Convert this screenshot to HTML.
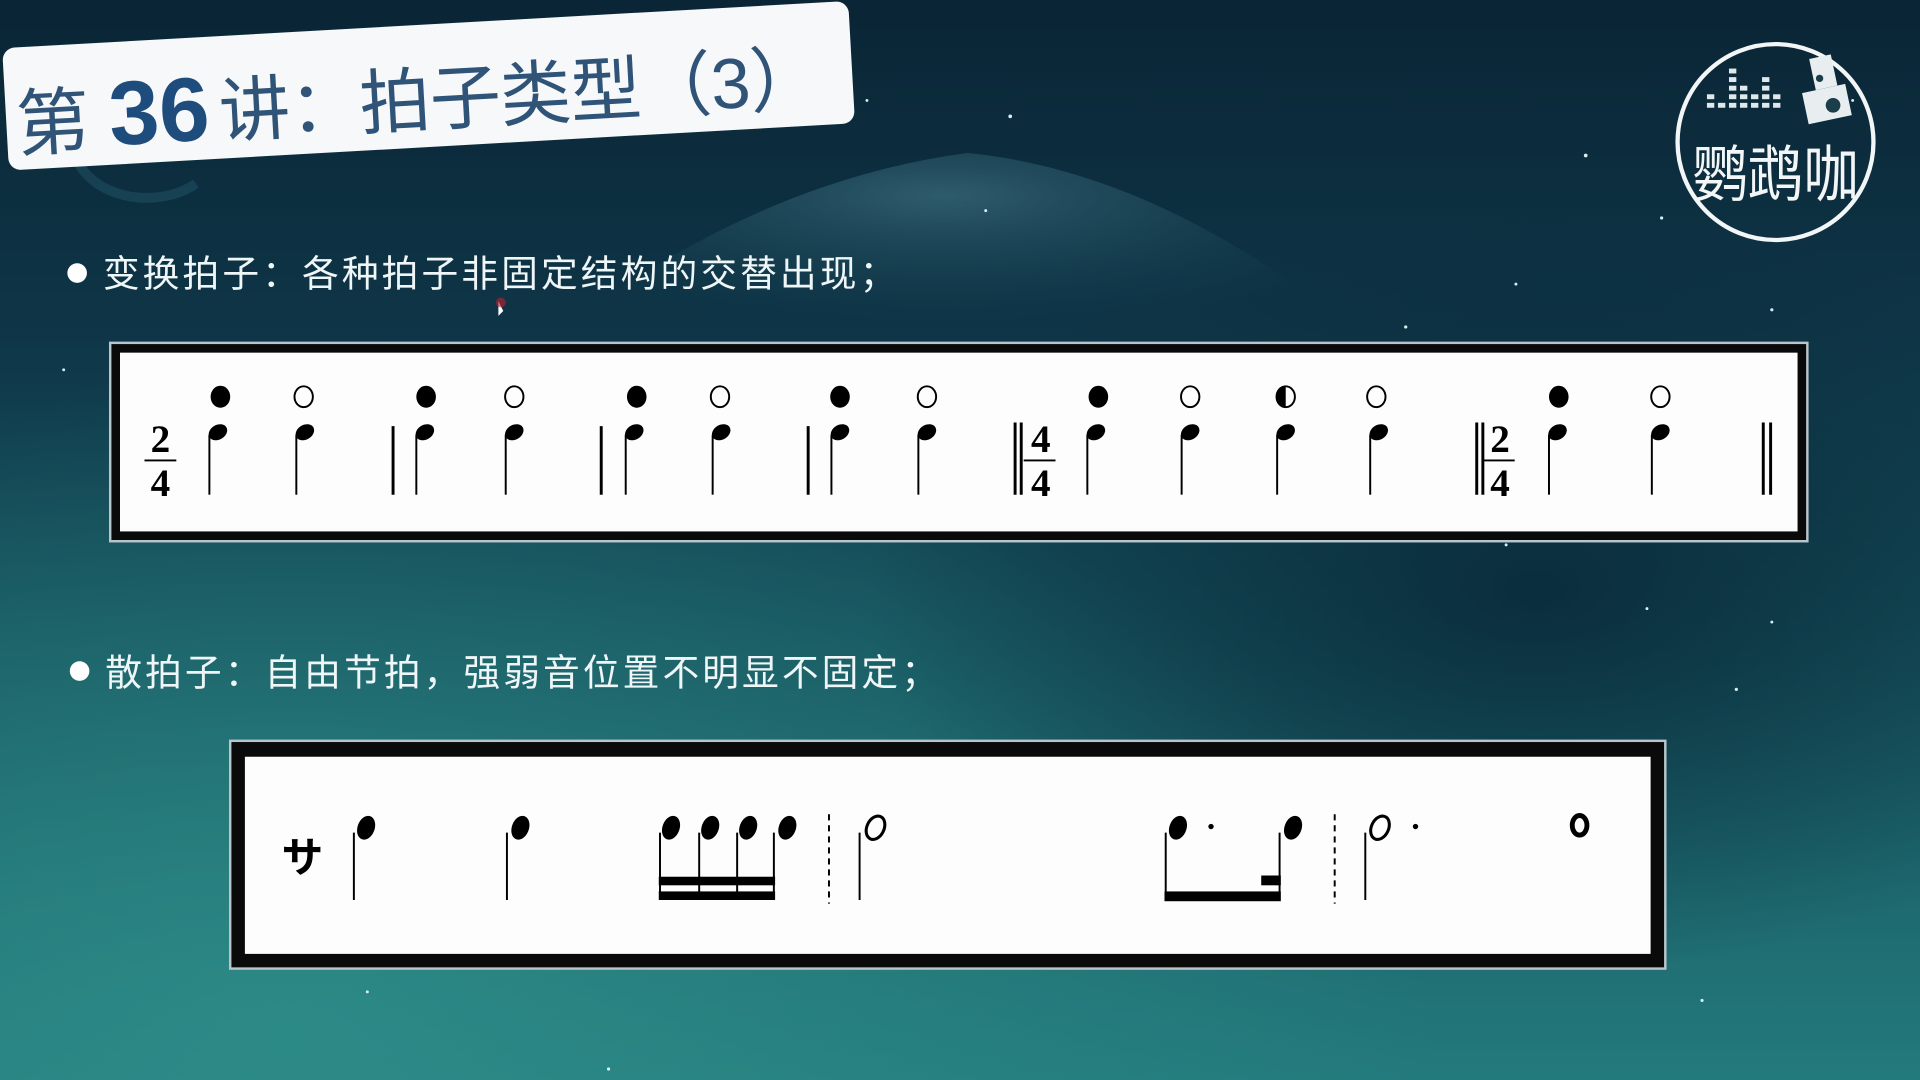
<!DOCTYPE html>
<html><head><meta charset="utf-8"><style>
html,body{margin:0;padding:0;width:1920px;height:1080px;overflow:hidden;background:#0d3444}
svg{display:block}
</style></head><body>
<svg width="1920" height="1080" viewBox="0 0 1568 882" xmlns="http://www.w3.org/2000/svg">
<defs>
<linearGradient id="bg" x1="0" y1="0" x2="0" y2="1">
<stop offset="0" stop-color="#0a2535"/>
<stop offset="0.3" stop-color="#0e3547"/>
<stop offset="0.6" stop-color="#16535e"/>
<stop offset="1" stop-color="#237a7c"/>
</linearGradient>
<radialGradient id="glow1" cx="0.15" cy="0.95" r="0.6">
<stop offset="0" stop-color="#2f8f8a" stop-opacity="0.8"/>
<stop offset="1" stop-color="#2f8f8a" stop-opacity="0"/>
</radialGradient>
<radialGradient id="glow2" cx="0.8" cy="0.55" r="0.35">
<stop offset="0" stop-color="#082535" stop-opacity="0.8"/>
<stop offset="1" stop-color="#082535" stop-opacity="0"/>
</radialGradient>
<radialGradient id="mtn" cx="0.5" cy="0.2" r="0.6">
<stop offset="0" stop-color="#3d6f80" stop-opacity="0.7"/>
<stop offset="1" stop-color="#1a4a5a" stop-opacity="0"/>
</radialGradient>
</defs>
<rect width="1568" height="882" fill="url(#bg)"/>
<rect width="1568" height="882" fill="url(#glow1)"/>
<rect width="1568" height="882" fill="url(#glow2)"/>
<path d="M420 300 Q600 150 790 125 Q950 140 1120 280 Z" fill="url(#mtn)"/>
<path d="M60 120 A60 45 0 0 0 160 150" fill="none" stroke="#1c4a5c" stroke-width="8" opacity="0.7"/>
<g fill="#d8eef0">
<circle cx="825" cy="95" r="1.5"/><circle cx="1295" cy="127" r="1.5"/><circle cx="1357" cy="178" r="1.3"/>
<circle cx="1447" cy="253" r="1.3"/><circle cx="1148" cy="267" r="1.3"/><circle cx="1238" cy="232" r="1.2"/>
<circle cx="805" cy="172" r="1.2"/><circle cx="52" cy="302" r="1.2"/><circle cx="1418" cy="563" r="1.3"/>
<circle cx="1390" cy="817" r="1.3"/><circle cx="497" cy="873" r="1.3"/><circle cx="1447" cy="508" r="1.2"/>
<circle cx="1513" cy="82" r="1.2"/><circle cx="708" cy="82" r="1.2"/><circle cx="1345" cy="497" r="1.2"/>
<circle cx="425" cy="780" r="1.2"/><circle cx="300" cy="810" r="1.2"/><circle cx="1230" cy="445" r="1.2"/>
</g>

<!-- title -->
<g transform="rotate(-3.2 350 70)">
<rect x="4" y="20" width="692" height="100" rx="10" fill="#f6f8fa"/>
<text x="12" y="104" font-family="'Liberation Sans','Noto Sans CJK SC',sans-serif" font-size="60" fill="#2f5478">第</text>
<text x="88" y="104" font-family="'Liberation Sans',sans-serif" font-weight="bold" font-size="74" fill="#1e4d7d" textLength="82" lengthAdjust="spacingAndGlyphs">36</text>
<text x="178" y="102" font-family="'Liberation Sans','Noto Sans CJK SC',sans-serif" font-size="58" fill="#2f5478" textLength="492" lengthAdjust="spacing">讲：拍子类型（3）</text>
</g>

<!-- logo -->
<g>
<circle cx="1450" cy="116" r="80" fill="none" stroke="#f2f6f7" stroke-width="3.5"/>
<g fill="#dfe9ec">
<rect x="1394" y="84" width="6" height="4"/><rect x="1403" y="84" width="6" height="4"/><rect x="1412" y="84" width="6" height="4"/><rect x="1421" y="84" width="6" height="4"/><rect x="1430" y="84" width="6" height="4"/><rect x="1439" y="84" width="6" height="4"/><rect x="1448" y="84" width="6" height="4"/>
<rect x="1394" y="77" width="6" height="4"/><rect x="1412" y="77" width="6" height="4"/><rect x="1421" y="77" width="6" height="4"/><rect x="1430" y="77" width="6" height="4"/><rect x="1439" y="77" width="6" height="4"/><rect x="1448" y="77" width="6" height="4"/>
<rect x="1412" y="70" width="6" height="4"/><rect x="1421" y="70" width="6" height="4"/><rect x="1439" y="70" width="6" height="4"/>
<rect x="1412" y="63" width="6" height="4"/><rect x="1439" y="63" width="6" height="4"/>
<rect x="1412" y="56" width="6" height="4"/>
</g>
<rect x="1480" y="46" width="18" height="26" fill="#e8eef0" transform="rotate(-12 1489 59)"/>
<rect x="1474" y="72" width="36" height="26" fill="#e8eef0" transform="rotate(-12 1492 85)"/>
<circle cx="1497" cy="86" r="6" fill="#1a3e4a"/><circle cx="1486" cy="64" r="3" fill="#1a3e4a"/>
<text x="1450" y="160" text-anchor="middle" font-family="'Noto Sans CJK SC','WenQuanYi Zen Hei',sans-serif" font-size="50" fill="#f2f6f7" textLength="136" lengthAdjust="spacingAndGlyphs">鹦鹉咖</text>
</g>

<!-- bullets -->
<g font-family="'Liberation Sans','Noto Sans CJK SC',sans-serif" font-size="30" fill="#eef6f7">
<circle cx="63" cy="223" r="8" fill="#fff"/>
<text x="84" y="234" textLength="648" lengthAdjust="spacing">变换拍子：各种拍子非固定结构的交替出现；</text>
<circle cx="65" cy="548" r="8" fill="#fff"/>
<text x="86" y="560" textLength="680" lengthAdjust="spacing">散拍子：自由节拍，强弱音位置不明显不固定；</text>
</g>
<path d="M407 246 L407 258 L411 254 Z" fill="#fff"/><circle cx="409" cy="247" r="4" fill="#c02030" opacity="0.6"/>

<!-- box 1 -->
<rect x="89" y="279" width="1388" height="164" fill="#b8c6cc"/>
<rect x="91" y="281" width="1384" height="160" fill="#0a0a0a"/>
<rect x="98" y="288" width="1370" height="146" fill="#fcfdfc"/>
<g fill="#000">
<ellipse cx="180" cy="324" rx="8" ry="9"/>
<ellipse cx="348" cy="324" rx="8" ry="9"/>
<ellipse cx="520" cy="324" rx="8" ry="9"/>
<ellipse cx="686" cy="324" rx="8" ry="9"/>
<ellipse cx="897" cy="324" rx="8" ry="9"/>
<ellipse cx="1273" cy="324" rx="8" ry="9"/>
<path d="M1050 315 A8 9 0 0 0 1050 333 Z"/>
</g>
<g fill="none" stroke="#000" stroke-width="1.6">
<ellipse cx="248" cy="324" rx="7.5" ry="8.5"/>
<ellipse cx="420" cy="324" rx="7.5" ry="8.5"/>
<ellipse cx="588" cy="324" rx="7.5" ry="8.5"/>
<ellipse cx="757" cy="324" rx="7.5" ry="8.5"/>
<ellipse cx="972" cy="324" rx="7.5" ry="8.5"/>
<ellipse cx="1124" cy="324" rx="7.5" ry="8.5"/>
<ellipse cx="1050" cy="324" rx="7.5" ry="8.5"/>
<ellipse cx="1356" cy="324" rx="7.5" ry="8.5"/>
</g>
<g>
<g fill="#000">
<ellipse cx="178" cy="353" rx="8" ry="6" transform="rotate(-30 178 353)"/>
<ellipse cx="249" cy="353" rx="8" ry="6" transform="rotate(-30 249 353)"/>
<ellipse cx="347" cy="353" rx="8" ry="6" transform="rotate(-30 347 353)"/>
<ellipse cx="420" cy="353" rx="8" ry="6" transform="rotate(-30 420 353)"/>
<ellipse cx="518" cy="353" rx="8" ry="6" transform="rotate(-30 518 353)"/>
<ellipse cx="589" cy="353" rx="8" ry="6" transform="rotate(-30 589 353)"/>
<ellipse cx="686" cy="353" rx="8" ry="6" transform="rotate(-30 686 353)"/>
<ellipse cx="757" cy="353" rx="8" ry="6" transform="rotate(-30 757 353)"/>
<ellipse cx="895" cy="353" rx="8" ry="6" transform="rotate(-30 895 353)"/>
<ellipse cx="972" cy="353" rx="8" ry="6" transform="rotate(-30 972 353)"/>
<ellipse cx="1050" cy="353" rx="8" ry="6" transform="rotate(-30 1050 353)"/>
<ellipse cx="1126" cy="353" rx="8" ry="6" transform="rotate(-30 1126 353)"/>
<ellipse cx="1272" cy="353" rx="8" ry="6" transform="rotate(-30 1272 353)"/>
<ellipse cx="1356" cy="353" rx="8" ry="6" transform="rotate(-30 1356 353)"/>
</g>
<g stroke="#000" stroke-width="1.6">
<line x1="171" y1="355" x2="171" y2="404"/><line x1="242" y1="355" x2="242" y2="404"/>
<line x1="340" y1="355" x2="340" y2="404"/><line x1="413" y1="355" x2="413" y2="404"/>
<line x1="511" y1="355" x2="511" y2="404"/><line x1="582" y1="355" x2="582" y2="404"/>
<line x1="679" y1="355" x2="679" y2="404"/><line x1="750" y1="355" x2="750" y2="404"/>
<line x1="888" y1="355" x2="888" y2="404"/><line x1="965" y1="355" x2="965" y2="404"/>
<line x1="1043" y1="355" x2="1043" y2="404"/><line x1="1119" y1="355" x2="1119" y2="404"/>
<line x1="1265" y1="355" x2="1265" y2="404"/><line x1="1349" y1="355" x2="1349" y2="404"/>
</g>
<g stroke="#000" stroke-width="2.4">
<line x1="321" y1="348" x2="321" y2="404"/><line x1="491" y1="348" x2="491" y2="404"/><line x1="660" y1="348" x2="660" y2="404"/>
<line x1="829" y1="345" x2="829" y2="404"/><line x1="834" y1="345" x2="834" y2="404"/>
<line x1="1206" y1="345" x2="1206" y2="404"/><line x1="1211" y1="345" x2="1211" y2="404"/>
<line x1="1440" y1="345" x2="1440" y2="404"/><line x1="1446" y1="345" x2="1446" y2="404"/>
</g>
<g font-family="'Liberation Serif',serif" font-weight="bold" font-size="32" fill="#000" text-anchor="middle">
<text x="131" y="369">2</text><text x="131" y="405">4</text>
<text x="850" y="369">4</text><text x="850" y="405">4</text>
<text x="1225" y="369">2</text><text x="1225" y="405">4</text>
</g>
<g stroke="#000" stroke-width="1.5">
<line x1="118" y1="376" x2="144" y2="376"/><line x1="836" y1="376" x2="862" y2="376"/><line x1="1211" y1="376" x2="1237" y2="376"/>
</g>
</g>

<!-- box 2 -->
<rect x="187" y="604" width="1174" height="188" fill="#b8c6cc"/>
<rect x="189" y="606" width="1170" height="184" fill="#0a0a0a"/>
<rect x="200" y="618" width="1148" height="161" fill="#fcfdfc"/>
<text x="247" y="712" text-anchor="middle" font-family="'Noto Sans CJK SC',sans-serif" font-weight="bold" font-size="34" fill="#000">サ</text>
<g fill="#000">
<ellipse cx="299" cy="676" rx="7" ry="10" transform="rotate(20 299 676)"/>
<ellipse cx="425" cy="676" rx="7" ry="10" transform="rotate(20 425 676)"/>
<ellipse cx="548" cy="676" rx="7" ry="10" transform="rotate(20 548 676)"/>
<ellipse cx="580" cy="676" rx="7" ry="10" transform="rotate(20 580 676)"/>
<ellipse cx="611" cy="676" rx="7" ry="10" transform="rotate(20 611 676)"/>
<ellipse cx="643" cy="676" rx="7" ry="10" transform="rotate(20 643 676)"/>
<ellipse cx="962" cy="676" rx="7" ry="10" transform="rotate(20 962 676)"/>
<ellipse cx="1056" cy="676" rx="7" ry="10" transform="rotate(20 1056 676)"/>
<circle cx="989" cy="675" r="2.2"/><circle cx="1156" cy="675" r="2.2"/>
<rect x="538" y="716" width="95" height="7"/><rect x="538" y="728" width="95" height="7"/>
<rect x="951" y="728" width="95" height="8"/><rect x="1030" y="715" width="16" height="8"/>
</g>
<g fill="none" stroke="#000" stroke-width="2.5">
<ellipse cx="715" cy="676" rx="7" ry="10" transform="rotate(25 715 676)"/>
<ellipse cx="1127" cy="676" rx="7" ry="10" transform="rotate(25 1127 676)"/>
<ellipse cx="1290" cy="674" rx="6" ry="8" stroke-width="4"/>
</g>
<g stroke="#000" stroke-width="1.6">
<line x1="289" y1="680" x2="289" y2="735"/><line x1="414" y1="680" x2="414" y2="735"/>
<line x1="539" y1="680" x2="539" y2="735"/><line x1="571" y1="680" x2="571" y2="735"/><line x1="602" y1="680" x2="602" y2="735"/><line x1="632" y1="680" x2="632" y2="735"/>
<line x1="702" y1="680" x2="702" y2="735"/><line x1="952" y1="680" x2="952" y2="735"/><line x1="1045" y1="680" x2="1045" y2="735"/>
<line x1="1115" y1="680" x2="1115" y2="735"/>
<line x1="677" y1="665" x2="677" y2="738" stroke-dasharray="5 4"/>
<line x1="1090" y1="665" x2="1090" y2="738" stroke-dasharray="5 4"/>
</g>
</svg>
</body></html>
